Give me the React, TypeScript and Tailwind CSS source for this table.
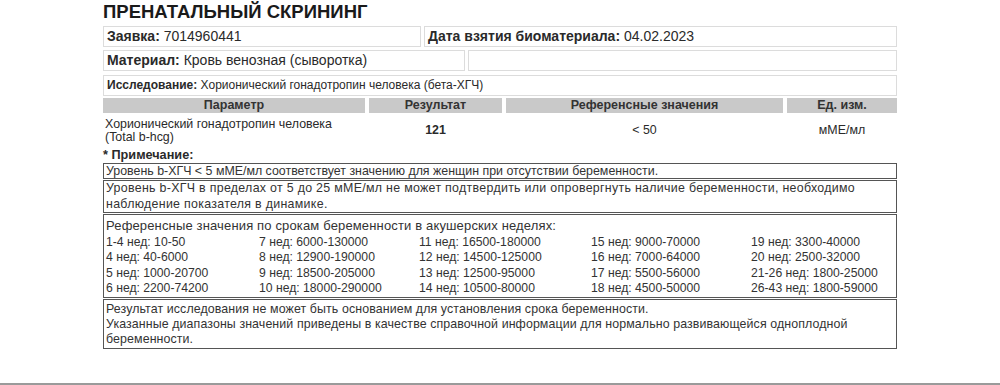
const weeks = [
  ["1-4 нед: 10-50", "7 нед: 6000-130000", "11 нед: 16500-180000", "15 нед: 9000-70000", "19 нед: 3300-40000"],
  ["4 нед: 40-6000", "8 нед: 12900-190000", "12 нед: 14500-125000", "16 нед: 7000-64000", "20 нед: 2500-32000"],
  ["5 нед: 1000-20700", "9 нед: 18500-205000", "13 нед: 12500-95000", "17 нед: 5500-56000", "21-26 нед: 1800-25000"],
  ["6 нед: 2200-74200", "10 нед: 18000-290000", "14 нед: 10500-80000", "18 нед: 4500-50000", "26-43 нед: 1800-59000"],
];

const App = () => {
  return (
    <div className="w-[1000px] h-[385px] bg-white text-[#2a2a2a] [font-family:'Liberation_Sans',Arial,sans-serif] flex flex-col">
      <div className="ml-[103px] w-[794px] flex flex-col">
        <h1 className="text-[18.5px] font-bold leading-[22px] text-[#1a1a1a] h-[24px] pt-[1px] whitespace-nowrap">
          ПРЕНАТАЛЬНЫЙ СКРИНИНГ
        </h1>

        <div className="flex gap-[3px] mt-[2px]">
          <div className="w-[318px] h-[21px] border border-[#dcdcdc] px-[3px] text-[14px] leading-[19px]">
            <b>Заявка:</b> 7014960441
          </div>
          <div className="flex-1 h-[21px] border border-[#dcdcdc] px-[3px] text-[14px] leading-[19px]">
            <b>Дата взятия биоматериала:</b> 04.02.2023
          </div>
        </div>

        <div className="flex gap-[3px] mt-[3px]">
          <div className="w-[362px] h-[21px] border border-[#dcdcdc] px-[3px] text-[14px] leading-[19px] whitespace-nowrap">
            <b>Материал:</b> Кровь венозная (сыворотка)
          </div>
          <div className="flex-1 h-[21px] border border-[#dcdcdc]" />
        </div>

        <div className="mt-[4px] h-[21px] border border-[#dcdcdc] px-[3px] text-[12px] leading-[19px]">
          <b>Исследование:</b> Хорионический гонадотропин человека (бета-ХГЧ)
        </div>

        <div className="flex gap-[4px] mt-[2px] h-[15px] text-[12.5px] font-bold leading-[15px] text-[#333]">
          <div className="w-[262px] bg-[#c9c9c9] text-center">Параметр</div>
          <div className="w-[133px] bg-[#c9c9c9] text-center">Результат</div>
          <div className="w-[277px] bg-[#c9c9c9] text-center">Референсные значения</div>
          <div className="flex-1 bg-[#c9c9c9] text-center">Ед. изм.</div>
        </div>

        <div className="flex gap-[4px] h-[35px] text-[12.4px] items-center">
          <div className="w-[262px] pl-[2px] leading-[13px]">
            Хорионический гонадотропин человека
            <br />
            (Total b-hcg)
          </div>
          <div className="w-[133px] text-center font-bold">121</div>
          <div className="w-[277px] text-center">&lt; 50</div>
          <div className="flex-1 text-center">мМЕ/мл</div>
        </div>

        <div className="text-[12.7px] font-bold leading-[14px] h-[15px]">* Примечание:</div>

        <div className="flex flex-col gap-[1px] text-[12.4px] text-[#333] whitespace-nowrap">
          <div className="border border-[#555] h-[16px] px-[2px] leading-[14px]">
            Уровень b-ХГЧ &lt; 5 мМЕ/мл соответствует значению для женщин при отсутствии беременности.
          </div>
          <div className="border border-[#555] h-[33px] px-[2px] leading-[15.5px] tracking-[0.3px]">
            Уровень b-ХГЧ в пределах от 5 до 25 мМЕ/мл не может подтвердить или опровергнуть наличие беременности, необходимо
            <br />
            наблюдение показателя в динамике.
          </div>
          <div className="border border-[#555] h-[84px] px-[2px] pt-[3px]">
            <div className="leading-[15px] h-[17px] text-[13px] tracking-[0.15px]">
              Референсные значения по срокам беременности в акушерских неделях:
            </div>
            <div className="grid grid-cols-[153px_160px_172px_160px_1fr] text-[12.2px] leading-[15.3px]">
              {weeks.flat().map((w) => (
                <div key={w}>{w}</div>
              ))}
            </div>
          </div>
          <div className="border border-[#555] h-[50px] px-[2px] pt-[2px] leading-[15px] tracking-[0.1px]">
            Результат исследования не может быть основанием для установления срока беременности.
            <br />
            Указанные диапазоны значений приведены в качестве справочной информации для нормально развивающейся одноплодной
            <br />
            беременности.
          </div>
        </div>
      </div>
      <div className="mt-auto h-[2px] bg-[#9a9a9a]" />
    </div>
  );
};

export default App;
